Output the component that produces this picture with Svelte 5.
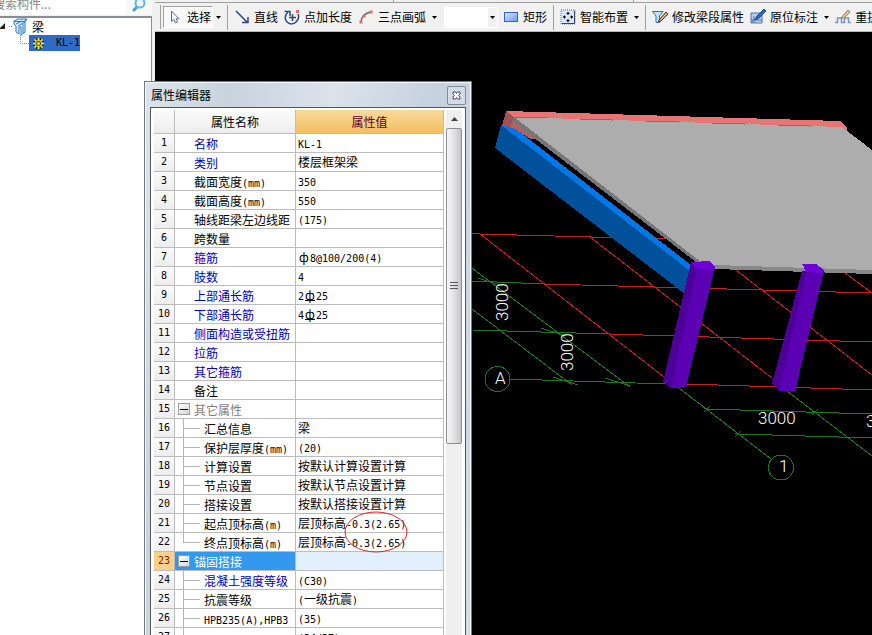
<script>
  const rows = [
    { name: '名称', value: 'KL-1', key: true },
    { name: '类别', value: '楼层框架梁', key: true },
    { name: '截面宽度(mm)', value: '350' },
    { name: '截面高度(mm)', value: '550' },
    { name: '轴线距梁左边线距', value: '(175)' },
    { name: '跨数量', value: '' },
    { name: '箍筋', value: 'ф8@100/200(4)', key: true },
    { name: '肢数', value: '4', key: true },
    { name: '上部通长筋', value: '2Ф25', key: true },
    { name: '下部通长筋', value: '4Ф25', key: true },
    { name: '侧面构造或受扭筋', value: '', key: true },
    { name: '拉筋', value: '', key: true },
    { name: '其它箍筋', value: '', key: true },
    { name: '备注', value: '' },
    { name: '其它属性', value: '', group: true },
    { name: '汇总信息', value: '梁', child: true },
    { name: '保护层厚度(mm)', value: '(20)', child: true },
    { name: '计算设置', value: '按默认计算设置计算', child: true },
    { name: '节点设置', value: '按默认节点设置计算', child: true },
    { name: '搭接设置', value: '按默认搭接设置计算', child: true },
    { name: '起点顶标高(m)', value: '层顶标高-0.3(2.65)', child: true, marked: true },
    { name: '终点顶标高(m)', value: '层顶标高-0.3(2.65)', child: true, last: true },
    { name: '锚固搭接', value: '', group: true, selected: true },
    { name: '混凝土强度等级', value: '(C30)', child: true, key: true },
    { name: '抗震等级', value: '(一级抗震)', child: true },
    { name: 'HPB235(A),HPB3', value: '(35)', child: true },
    { name: 'HPB235(B),HPB3', value: '(34/37)', child: true }
  ];

  // Splits a label into half-width, rebar-symbol and full-width runs.
  function runs(text) {
    return text
      .split(/([\x20-\x7e]+|[фФ])/)
      .filter(Boolean)
      .map((t) => ({
        t: t === 'Ф' ? 'ф' : t,
        kind: t === 'ф' ? 'bar' : t === 'Ф' ? 'bar ribbed' : /^[\x20-\x7e]/.test(t) ? 'half' : 'full'
      }));
  }

  const ticks = [[490, 282], [553, 332], [565, 381], [617, 382]];
  const crosses = [[707, 409], [815, 412], [738, 434]];
</script>

{#snippet mixed(text)}
  {#each runs(text) as r}<span class={r.kind}>{r.t}</span>{/each}
{/snippet}

{#snippet caret(label)}
  <button class="caret" aria-label={label}>
    <svg width="5" height="3" viewBox="0 0 5 3"><path d="M0 0H5L2.5 3Z" fill="#000" /></svg>
  </button>
{/snippet}

<div class="app">
  <aside class="side">
    <div class="search">
      <input type="text" placeholder="搜索构件..." aria-label="搜索构件" />
      <button aria-label="搜索">
        <svg width="16" height="16" viewBox="0 0 16 16" fill="none">
          <path d="M6 7L3 10" stroke="#4a9bd8" stroke-width="3" stroke-linecap="round" />
          <circle cx="9" cy="3" r="4.500" fill="#e9f6ff" stroke="#64b4e8" stroke-width="2" />
        </svg>
      </button>
    </div>
    <div class="tree">
      <div class="node">
        <svg width="31" height="18" viewBox="0 0 31 18" fill="none">
          <path d="M5 5V11H-1Z" fill="#222" />
          <path d="M9 8.500H13" stroke="#888" stroke-dasharray="1 1" />
          <path d="M14 3L18 1H27L25 4V14L21 17V9L19 9V16L16 14V8L14 6Z" fill="#d9efff" stroke="#2a7ac4" />
          <path d="M14 3.500H24L27 1M16 6L22 3M18 8L25 4M23 6V15" stroke="#2a7ac4" />
        </svg>
        <span>梁</span>
      </div>
      <div class="node leaf">
        <svg width="9" height="16" viewBox="0 0 9 16"><path d="M0.500 0V8.500H9" fill="none" stroke="#888" stroke-dasharray="1 1" /></svg>
        <a class="picked" href="#kl-1">
          <svg width="11" height="11" viewBox="0 0 11 11">
            <path d="M3.500 0V11M7.500 0V11M0 3.500H11M0 7.500H11" stroke="#222" />
            <path d="M5.500 0V11M0 5.500H11M1.500 1.500L9.500 9.500M9.500 1.500L1.500 9.500" stroke="#f6ee20" stroke-width="1.500" />
            <circle cx="5.500" cy="5.500" r="3" fill="#333" stroke="#f6ee20" />
            <circle cx="5.500" cy="5.500" r="1.500" fill="#f6ee20" />
          </svg>
          <span class="code">KL-1</span>
        </a>
      </div>
    </div>
  </aside>

  <main>
    <div class="strip"><i></i><i></i></div>
    <div class="toolbar">
      <span class="grip"></span>
      <button class="tool pressed">
        <svg width="16" height="16" viewBox="0 0 16 16"><path d="M4.500 2V12.500L7 10.500L8.500 14L10.500 13L9 9.800H12Z" fill="#fff" stroke="#5a6c88" /></svg>
        选择
      </button>
      {@render caret('选择方式')}
      <span class="sep"></span>
      <button class="tool">
        <svg width="16" height="16" viewBox="0 0 16 16"><path d="M2 2L13 13M14 8V13.500H8" fill="none" stroke="#2c4a80" stroke-width="1.500" /></svg>
        直线
      </button>
      <button class="tool">
        <svg width="16" height="16" viewBox="0 0 16 16" fill="none" stroke="#2c4a80">
          <path d="M4 3C0 7 1 11 3 13C6 16 10 15 12 13C15 10 15 7 14 5" stroke-width="1.500" />
          <path d="M0.500 2.500H6V7M8.500 5V12M5 8.500H12" stroke-width="1.500" />
          <path d="M12 1H15V4H12Z" fill="#e07060" stroke="none" />
        </svg>
        点加长度
      </button>
      <button class="tool">
        <svg width="16" height="16" viewBox="0 0 16 16" fill="none">
          <path d="M3 13C3 8 7 4 13 3" stroke="#56657c" stroke-width="1.500" />
          <path d="M1.500 11.500H4.500V14.500H1.500ZM4.500 5.500H7.500V8.500H4.500ZM11.500 1.500H14.500V4.500H11.500Z" fill="#d9705c" />
        </svg>
        三点画弧
      </button>
      {@render caret('画弧方式')}
      <span class="combo">
        <select aria-label="画弧参数"><option></option></select>
        <svg width="5" height="3" viewBox="0 0 5 3"><path d="M0 0H5L2.5 3Z" fill="#000" /></svg>
      </span>
      <button class="tool">
        <svg width="16" height="16" viewBox="0 0 16 16">
          <defs><linearGradient id="rect-fill" x2="1" y2="1"><stop stop-color="#d5e5ff" /><stop offset="1" stop-color="#6e9bf2" /></linearGradient></defs>
          <rect x="1.500" y="3.500" width="13" height="9" fill="url(#rect-fill)" stroke="#3c62b8" />
        </svg>
        矩形
      </button>
      <span class="sep"></span>
      <button class="tool">
        <svg width="16" height="16" viewBox="0 0 16 16" fill="none">
          <rect x="1" y="1" width="14" height="14" fill="#dbe7f8" stroke="#5a6e96" stroke-dasharray="1 1" />
          <path d="M14.500 2V14.500H2" stroke="#31456e" />
          <path d="M8 3V6M8 10V13M3 8H6M10 8H13" stroke="#111" />
          <path d="M6 5L8 3L10 5ZM6 11L8 13L10 11ZM5 6L3 8L5 10ZM11 6L13 8L11 10Z" fill="#111" />
        </svg>
        智能布置
      </button>
      {@render caret('布置方式')}
      <span class="sep"></span>
      <button class="tool">
        <svg width="16" height="16" viewBox="0 0 16 16" fill="none">
          <path d="M0.500 2.500H11L7.500 7V13.500H4V7Z" fill="#c4e3f8" stroke="#2878b4" />
          <path d="M7 11L14 3L16 5L9 12L6.500 13Z" fill="#e8b070" stroke="#33302c" />
        </svg>
        修改梁段属性
      </button>
      <button class="tool">
        <svg width="16" height="16" viewBox="0 0 16 16" fill="none">
          <path d="M1 4H12V14H1Z" fill="#b9cdea" stroke="#5574a8" />
          <path d="M1 14L8 7M4 7V14M1 11H12" stroke="#5574a8" />
          <path d="M5 11L7 7L14 0L16 2L9 9Z" fill="#2a6cc0" stroke="#1c4a8c" />
        </svg>
        原位标注
      </button>
      {@render caret('标注方式')}
      <button class="tool after-caret">
        <svg width="16" height="16" viewBox="0 0 16 16" fill="none">
          <path d="M0 13.500H2.500V9H6.500V13.500H9.500V9H13.500V13.500H16" stroke="#7b96bd" stroke-width="1.500" />
          <path d="M6 9L13 1L15 3L9 9Z" fill="#e4cf9c" stroke="#8a7a5c" />
        </svg>
        重提
      </button>
    </div>

    <svg class="view" viewBox="155 32 717 603" preserveAspectRatio="xMinYMin slice" role="img" aria-label="三维视图">
      <g stroke="#c81e1e" shape-rendering="crispEdges">
        <path d="M480 234L666 239M545 284L872 293M610 334L872 342M687 384L872 390" />
        <path d="M480 234L664 377M590 237L772 378M736 270L872 375M845 273L872 293" />
      </g>
      <g stroke="#1e781e" fill="none" shape-rendering="crispEdges">
        <path d="M472 233H480M472 281L545 284M472 330L610 334M510 379L668 384" />
        <path d="M472 268L630 387M472 309L572 385" />
        <path d="M679 388L771 459M787 391L872 456M707 409L872 414M738 434L872 438" />
        {#each ticks as [x, y]}<path d="M{x - 12} {y - 4}L{x + 13} {y + 4}" />{/each}
        {#each crosses as [x, y]}<path d="M{x - 3} {y + 3}L{x + 3} {y - 3}M{x - 3} {y - 1}L{x + 4} {y + 1}" />{/each}
        <circle cx="497.500" cy="379" r="12.500" />
        <circle cx="781" cy="467.500" r="12.500" />
      </g>
      <g shape-rendering="crispEdges">
        <path d="M506 111L514 117L511 128L502 126Z" fill="#a05252" />
        <path d="M510 127L514 119L537 139H531Z" fill="#b86060" />
        <path d="M514 117L842 127L872 150V270L714 265L698 262Z" fill="#adadad" />
        <path d="M514 117L701 262H696L512 121Z" fill="#777" />
        <path d="M714 265L872 270V274L714 269Z" fill="#888" />
        <path d="M506 111L840 121L847 127V131L842 127L514 117Z" fill="#e87575" />
        <path d="M514 117L842 127" stroke="#b05a5a" stroke-dasharray="33 33" />
        <path d="M501 125L495 148L685 294L690 271Z" fill="#00509a" />
        <path d="M501 125L516 129L691 265L690 271Z" fill="#0077e8" />
        <path d="M691 262L697 269L671 388L663 382Z" fill="#4c0098" />
        <path d="M697 269L715 267L686 387L671 388Z" fill="#5c00b4" />
        <path d="M691 262L710 261L715 267L712 270L697 269Z" fill="#6e00d8" />
        <path d="M802 271L808 271L779 391L772 384Z" fill="#4c0098" />
        <path d="M807 271L824 271L795 391H779Z" fill="#5c00b4" />
        <path d="M801 264H816L824 270L821 273L805 272L804 266Z" fill="#6e00d8" />
      </g>
      <g class="dims">
        <text x="758" y="424">3000</text>
        <text x="866" y="427">3000</text>
        <text transform="translate(508 321) rotate(-90)">3000</text>
        <text transform="translate(573 371) rotate(-90)">3000</text>
        <text x="495" y="384">A</text>
        <text x="779" y="472">1</text>
      </g>
    </svg>
  </main>

  <section class="dialog" aria-label="属性编辑器">
    <header>
      <span>属性编辑器</span>
      <button class="close" aria-label="关闭">
        <svg width="9" height="9" viewBox="0 0 9 9"><path d="M1 1H3.500L4.500 2.500L5.500 1H8V3L6.500 4.500L8 6V8H5.500L4.500 6.500L3.500 8H1V6L2.500 4.500L1 3Z" fill="#fff" stroke="#444b58" /></svg>
      </button>
    </header>
    <div class="body">
      <table>
        <colgroup><col class="c-no" /><col class="c-name" /><col /></colgroup>
        <thead>
          <tr><th></th><th>属性名称</th><th class="active">属性值</th></tr>
        </thead>
        <tbody>
          {#each rows as row, i}
            <tr class:selected={row.selected}>
              <th scope="row">{i + 1}</th>
              <td class="name" class:key={row.key} class:group={row.group} class:child={row.child} class:last={row.last}>
                {#if row.group}
                  <button class="toggle" aria-label="折叠{row.name}"></button>
                {/if}
                <span class="label">{@render mixed(row.name)}</span>
              </td>
              <td class="value">
                <span class="label">{@render mixed(row.value)}</span>
                {#if row.marked}
                  <svg class="mark" width="64" height="42" viewBox="0 0 64 42"><ellipse cx="32" cy="21" rx="31" ry="20" fill="none" stroke="#d42a2a" /></svg>
                {/if}
              </td>
            </tr>
          {/each}
        </tbody>
      </table>
      <div class="scroll">
        <button aria-label="向上滚动">
          <svg width="7" height="4" viewBox="0 0 7 4"><path d="M0 4L3.500 0L7 4Z" fill="#444" /></svg>
        </button>
        <div class="thumb"><i></i><i></i><i></i></div>
      </div>
    </div>
  </section>
</div>

<style>
  :global(body) {
    margin: 0;
    overflow: hidden;
  }
  .app {
    position: relative;
    display: flex;
    height: 100vh;
    overflow: hidden;
    background: #f0f0f0;
    color: #000;
    font: 12px/16px "Noto Sans CJK SC", sans-serif;
  }
  button,
  input,
  select {
    margin: 0;
    padding: 0;
    border: 0;
    background: none;
    color: inherit;
    font: inherit;
  }
  svg {
    display: block;
    flex: none;
  }
  .half,
  .code,
  tbody th {
    font-family: "DejaVu Sans Mono", monospace;
    font-size: 10px;
  }
  .bar {
    display: inline-block;
    width: 12px;
    height: 12px;
    line-height: 12px;
    text-align: center;
  }
  .ribbed {
    box-sizing: border-box;
    width: 10px;
    margin: 0 1px;
    border-bottom: 1px solid #000;
  }

  .side {
    display: flex;
    flex: none;
    flex-direction: column;
    width: 152px;
    margin-right: 3px;
  }
  .search {
    display: flex;
    height: 16px;
  }
  .search input {
    flex: 1;
    box-sizing: border-box;
    min-width: 0;
    height: 15px;
    padding-bottom: 7px;
    background: #fff;
    text-indent: -7px;
  }
  .search input::placeholder {
    color: #888;
    opacity: 1;
  }
  .search button {
    width: 26px;
    height: 15px;
    padding-left: 5px;
    overflow: hidden;
    background: #f8f8f8;
  }
  .tree {
    flex: 1;
    border-top: 2px solid #8a8d92;
    border-right: 1px solid #8a8d92;
    background: #fff;
  }
  .node {
    display: flex;
    align-items: center;
    gap: 1px;
    height: 17px;
  }
  .leaf {
    gap: 0;
    padding-left: 20px;
    height: 16px;
  }
  .picked {
    display: flex;
    align-items: center;
    gap: 12px;
    height: 16px;
    padding-left: 4px;
    background: #316ac5;
    color: #000;
    text-decoration: none;
  }

  main {
    display: flex;
    flex: 1;
    flex-direction: column;
    min-width: 0;
  }
  .strip {
    display: flex;
    justify-content: space-evenly;
    height: 2px;
    border-bottom: 1px solid #a0a0a0;
  }
  .strip i {
    width: 1px;
    background: #a0a0a0;
  }
  .toolbar {
    display: flex;
    align-items: center;
    height: 28px;
    padding-left: 5px;
    overflow: hidden;
    border-bottom: 1px solid #b8b8b8;
    background: #f1f1f1;
    white-space: nowrap;
  }
  .grip {
    flex: none;
    width: 1px;
    height: 24px;
    margin-right: 2px;
    background: #a0a0a0;
  }
  .tool {
    display: flex;
    flex: none;
    align-items: center;
    gap: 4px;
    height: 22px;
    padding: 0 3px;
  }
  .pressed {
    padding: 0 1px 0 3px;
    border: 1px solid #fff;
    border-top-color: #a0a0a0;
    border-left-color: #a0a0a0;
    background: #f9f9f9;
  }
  .caret {
    display: grid;
    flex: none;
    place-items: center;
    width: 11px;
    height: 22px;
  }
  .sep {
    flex: none;
    width: 1px;
    height: 25px;
    margin: 0 3px;
    background: #a0a0a0;
  }
  .combo {
    display: grid;
    flex: none;
    align-items: center;
    justify-items: end;
    margin: 0 2px 0 4px;
  }
  .combo > * {
    grid-area: 1 / 1;
  }
  .combo select {
    width: 54px;
    height: 21px;
    appearance: none;
    border: 1px solid #fff;
    background: linear-gradient(to left, #f1f1f1 9px, #fff 9px);
  }
  .combo svg {
    margin-right: 3px;
    pointer-events: none;
  }
  .view {
    flex: 1;
    width: 100%;
    min-height: 0;
    background: #000;
  }
  .dims {
    fill: #fff;
    font: 300 17px Roboto, sans-serif;
  }

  .dialog {
    position: absolute;
    top: 81px;
    bottom: -1px;
    left: 144px;
    display: flex;
    flex-direction: column;
    box-sizing: border-box;
    width: 328px;
    padding: 0 5px;
    border: 1px solid #6f7883;
    border-bottom: 0;
    background: linear-gradient(100deg, #dde3ea, #c9d3de 20%, #dbe2ea 45%, #c6d1de 70%, #d3dde8);
    box-shadow: inset 1px 1px #f4f7fa, inset -1px 0 #f4f7fa;
  }
  header {
    display: flex;
    flex: none;
    align-items: center;
    justify-content: space-between;
    height: 25px;
    padding: 0 0 0 1px;
  }
  .close {
    display: grid;
    place-items: center;
    width: 19px;
    height: 19px;
    margin-top: 2px;
    border: 1px solid #7e8a99;
    border-radius: 2px;
    background: #d3dce6;
  }
  .body {
    display: flex;
    flex: 1;
    min-height: 0;
    padding: 2px 3px 0 3px;
    overflow: hidden;
    border: 1px solid #50565e;
    border-bottom: 0;
    background: #fff;
  }
  table {
    flex: 1;
    align-self: flex-start;
    border-spacing: 0;
    table-layout: fixed;
    background: #fff;
  }
  .c-no {
    width: 21px;
  }
  .c-name {
    width: 121px;
  }
  th,
  td {
    box-sizing: border-box;
    height: 19px;
    padding: 0;
    border: solid #bcbcbc;
    border-width: 0 1px 1px 0;
    font-weight: 400;
    line-height: 16px;
    white-space: nowrap;
  }
  th {
    background: linear-gradient(#fbfbfb, #ededed);
  }
  thead th {
    height: 24px;
  }
  thead .active {
    background: linear-gradient(#f9d99c, #f0c060);
    color: #600030;
  }
  .name {
    position: relative;
    padding: 1px 0 0 19px;
  }
  .label {
    display: block;
    height: 16px;
  }
  .key {
    color: #0000b4;
  }
  .group {
    color: #808080;
  }
  .child {
    padding-left: 29px;
    background:
      linear-gradient(#b4b4b4, #b4b4b4) 8px 9px / 17px 1px no-repeat,
      linear-gradient(#b4b4b4, #b4b4b4) 8px 0 / 1px 100% no-repeat;
  }
  .last {
    background:
      linear-gradient(#b4b4b4, #b4b4b4) 8px 9px / 17px 1px no-repeat,
      linear-gradient(#b4b4b4, #b4b4b4) 8px 0 / 1px 9px no-repeat;
  }
  .value {
    position: relative;
    padding-left: 2px;
  }
  .toggle {
    position: absolute;
    top: 3px;
    left: 3px;
    width: 12px;
    height: 12px;
    border: 1px solid #9a9a9a;
    background:
      linear-gradient(#000, #000) center / 8px 1px no-repeat,
      linear-gradient(135deg, #fff, #d4d4d4);
  }
  .selected th {
    background: #fbd08a;
    color: #7a2000;
  }
  .selected .name {
    background: #3399f0;
    color: #fff;
  }
  .selected .value {
    background: #e2f0fe;
  }
  .mark {
    position: absolute;
    z-index: 1;
    top: -3px;
    left: 48px;
  }
  .scroll {
    display: flex;
    flex: none;
    flex-direction: column;
    width: 16px;
    margin-left: 2px;
    background: #efefef;
  }
  .scroll button {
    display: grid;
    place-items: center;
    width: 16px;
    height: 18px;
  }
  .thumb {
    display: flex;
    flex-direction: column;
    align-items: center;
    justify-content: center;
    gap: 2px;
    box-sizing: border-box;
    height: 60%;
    border: 1px solid #8e8e8e;
    border-radius: 2px;
    background: linear-gradient(90deg, #f6f6f6, #e4e4e4 45%, #c4c4c8);
  }
  .thumb i {
    width: 8px;
    height: 1px;
    background: #555;
  }
</style>
